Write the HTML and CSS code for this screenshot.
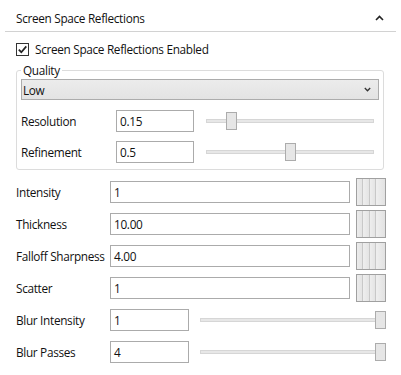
FILE: index.html
```html
<!DOCTYPE html>
<html>
<head>
<meta charset="utf-8">
<link rel="stylesheet" href="styles.css">
</head>
<body>
<div class="panel">
  <div class="header">
    <span class="title">Screen Space Reflections</span>
    <svg class="chev-up" width="9" height="6" viewBox="0 0 9 6"><polyline points="1,5 4.5,1.5 8,5" fill="none" stroke="#222" stroke-width="1.6"/></svg>
  </div>

  <label class="check-row">
    <span class="checkbox"><svg width="11" height="11" viewBox="0 0 11 11"><polyline points="1.8,5.6 4.3,8.2 9.3,2.4" fill="none" stroke="#222" stroke-width="1.7"/></svg></span>
    <span>Screen Space Reflections Enabled</span>
  </label>

  <fieldset class="group">
    <legend>Quality</legend>
    <div class="select">
      <span>Low</span>
      <svg width="7" height="5" viewBox="0 0 7 5"><polyline points="0.8,1 3.5,3.8 6.2,1" fill="none" stroke="#333" stroke-width="1.3"/></svg>
    </div>
    <div class="qrow">
      <span class="label">Resolution</span>
      <div class="input">0.15</div>
      <div class="slider q"><div class="track"></div><div class="thumb" style="left:20px"></div></div>
    </div>
    <div class="qrow">
      <span class="label">Refinement</span>
      <div class="input">0.5</div>
      <div class="slider q"><div class="track"></div><div class="thumb" style="left:79px"></div></div>
    </div>
  </fieldset>

  <div class="props">
    <div class="prow">
      <span class="label">Intensity</span>
      <div class="input wide">1</div>
      <div class="swatch"></div>
    </div>
    <div class="prow">
      <span class="label">Thickness</span>
      <div class="input wide">10.00</div>
      <div class="swatch"></div>
    </div>
    <div class="prow">
      <span class="label">Falloff Sharpness</span>
      <div class="input wide">4.00</div>
      <div class="swatch"></div>
    </div>
    <div class="prow">
      <span class="label">Scatter</span>
      <div class="input wide">1</div>
      <div class="swatch"></div>
    </div>
    <div class="prow">
      <span class="label">Blur Intensity</span>
      <div class="input short">1</div>
      <div class="slider b"><div class="track"></div><div class="thumb max"></div></div>
    </div>
    <div class="prow">
      <span class="label">Blur Passes</span>
      <div class="input short">4</div>
      <div class="slider b"><div class="track"></div><div class="thumb max"></div></div>
    </div>
  </div>
</div>
</body>
</html>
```

FILE: styles.css
```css
* { box-sizing: border-box; }
html, body { margin: 0; padding: 0; background: #fff; }
body {
  font-family: "Open Sans", "Noto Sans", sans-serif;
  font-size: 11.8px;
  letter-spacing: -0.32px;
  color: #111;
  width: 401px;
  height: 375px;
  overflow: hidden;
}
.panel { display: flex; flex-direction: column; }

.header {
  height: 32px;
  margin: 0 5px;
  padding: 0 12px 0 11px;
  border-bottom: 1px solid #d2d2d2;
  display: flex;
  align-items: center;
  justify-content: space-between;
  padding-top: 4px;
}
.title { line-height: 16px; }

.check-row {
  height: 18px;
  margin-top: 8px;
  padding-left: 16px;
  display: flex;
  align-items: center;
  gap: 6px;
}
.checkbox {
  width: 13px;
  height: 13px;
  border: 1px solid #333;
  background: #fff;
  display: flex;
  align-items: center;
  justify-content: center;
}

.group {
  margin: 4px 17px 0 16px;
  padding: 1px 4px 6px 4px;
  border: 1px solid #dcdcdc;
  border-radius: 3px;
  display: flex;
  flex-direction: column;
  gap: 9px;
  min-width: 0;
}
.group legend {
  padding: 0 2px;
  line-height: 16px;
}
.select {
  height: 21px;
  border: 1px solid #acacac;
  background: linear-gradient(#ececec, #e3e3e3);
  display: flex;
  align-items: center;
  justify-content: space-between;
  padding: 0 7px 0 1px;
  margin-bottom: 1px;
}

.qrow {
  display: flex;
  align-items: center;
  height: 22px;
}
.qrow .label { width: 95px; }
.input {
  height: 22px;
  border: 1px solid #ababab;
  background: #fff;
  padding: 0 3px;
  display: flex;
  align-items: center;
}
.qrow .input { width: 78px; }

.slider { position: relative; height: 18px; }
.slider .track {
  position: absolute;
  left: 0; right: 0;
  top: 7px;
  height: 4px;
  background: #e7e7e7;
  border: 1px solid #d6d6d6;
}
.slider .thumb {
  position: absolute;
  top: 0;
  width: 11px;
  height: 18px;
  background: #e6e6e6;
  border: 1px solid #acacac;
}
.slider.q { width: 168px; margin-left: 12px; }
.slider.b { width: 186px; margin-left: 11px; }
.slider.b .track { right: 9px; }
.slider .thumb.max { right: 0; }

.props {
  margin-top: 8px;
  padding-left: 16px;
  display: flex;
  flex-direction: column;
  gap: 4px;
}
.prow {
  height: 28px;
  display: flex;
  align-items: center;
}
.prow .label { width: 94px; white-space: nowrap; }
.input.wide { width: 240px; }
.input.short { width: 79px; }
.swatch {
  width: 30px;
  height: 28px;
  margin-left: 6px;
  border: 1px solid #a0a0a0;
  background:
    linear-gradient(to right,
      #ececec 0, #e4e4e4 5px, #c8c8c8 5px, #c8c8c8 6px,
      #eeeeee 6px, #e4e4e4 12px, #c8c8c8 12px, #c8c8c8 13px,
      #eeeeee 13px, #e4e4e4 18px, #c8c8c8 18px, #c8c8c8 19px,
      #efefef 19px, #e2e2e2 28px);
}
```
